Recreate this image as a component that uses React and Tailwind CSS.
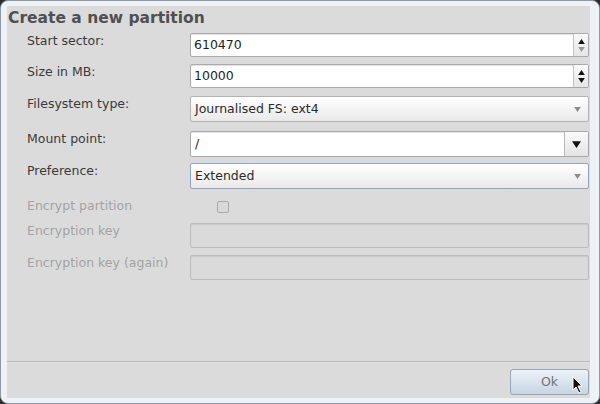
import React from "react";

// Small triangle used by the spin boxes and drop-downs
function Tri({ up = false, className = "", w = 7, h = 5 }) {
  return (
    <svg width={w} height={h} viewBox="0 0 8 6" className={className}>
      {up ? <polygon points="4,0 8,6 0,6" fill="currentColor" /> : <polygon points="0,0 8,0 4,6" fill="currentColor" />}
    </svg>
  );
}

function SpinField({ value, downDisabled }) {
  return (
    <div className="flex h-[24px] w-[399px] rounded-[2px] border border-[#a9a9a9] bg-white shadow-[inset_0_1px_1px_rgba(0,0,0,0.12)]">
      <div className="flex flex-1 items-center pl-[3px] text-[12.5px] text-[#1e1e1e]">{value}</div>
      <div className="flex w-[15px] flex-col items-center justify-center gap-[3px] border-l border-[#c4c4c4] bg-gradient-to-b from-[#fafafa] to-[#e6e6e6]">
        <Tri up className="text-[#111]" />
        <Tri className={downDisabled ? "text-[#9a9a9a]" : "text-[#111]"} />
      </div>
    </div>
  );
}

function SelectField({ value, focused }) {
  return (
    <div
      className={
        focused
          ? "flex h-[26px] w-[399px] items-center rounded-[2px] border border-[#8ea6c0] bg-gradient-to-b from-white to-[#e9e9e9] pl-[4px] pr-[7px]"
          : "flex h-[26px] w-[399px] items-center rounded-[2px] border border-[#b3b3b3] bg-gradient-to-b from-white to-[#e9e9e9] pl-[4px] pr-[7px]"
      }
    >
      <span className="flex-1 text-[12.5px] text-[#2a2a2a]">{value}</span>
      <Tri className="text-[#8a8a8a]" />
    </div>
  );
}

function ComboField({ value }) {
  return (
    <div className="flex h-[26px] w-[399px] rounded-[2px] border border-[#a9a9a9] bg-white shadow-[inset_0_1px_1px_rgba(0,0,0,0.12)]">
      <div className="flex flex-1 items-center pl-[4px] text-[12.5px] text-[#1e1e1e]">{value}</div>
      <div className="flex w-[24px] items-center justify-center border-l border-[#b8b8b8] bg-gradient-to-b from-[#fbfbfb] to-[#e4e4e4]">
        <Tri className="text-[#111]" w={9} h={7} />
      </div>
    </div>
  );
}

function DisabledField() {
  return (
    <div className="h-[25px] w-[399px] rounded-[2px] border border-[#bdbdbd] bg-[#dadada] shadow-[inset_0_1px_1px_rgba(0,0,0,0.08)]" />
  );
}

function Row({ label, disabled, className = "", children }) {
  return (
    <div className={"flex items-start " + className}>
      <div
        className={
          disabled
            ? "w-[163px] text-[12.5px] leading-[16px] text-[#a3a3a3]"
            : "w-[163px] text-[12.5px] leading-[16px] text-[#3a3a3a]"
        }
      >
        {label}
      </div>
      {children}
    </div>
  );
}

export default function App() {
  return (
    <div className="h-[404px] w-[600px] bg-[#2c2c2c] font-['DejaVu_Sans',sans-serif]">
      <div className="h-full rounded-[8px] border border-[#8f99a3] bg-[#eef2f6] pb-[5px] pl-[6px] pr-[9px] pt-[5px]">
        <div className="flex h-full flex-col bg-[#dbdbdb]">
          {/* Dialog title */}
          <h1 className="pl-[1px] pt-[3px] text-[15.5px] font-bold leading-[18px] text-[#505050]">
            Create a new partition
          </h1>

          {/* Form rows */}
          <div className="mt-[6px] flex flex-col pl-[20px] pr-[1px]">
            <Row label="Start sector:">
              <SpinField value="610470" downDisabled />
            </Row>
            <Row label="Size in MB:" className="mt-[7px]">
              <SpinField value="10000" />
            </Row>
            <Row label="Filesystem type:" className="mt-[8px]">
              <SelectField value="Journalised FS: ext4" />
            </Row>
            <Row label="Mount point:" className="mt-[9px]">
              <ComboField value="/" />
            </Row>
            <Row label="Preference:" className="mt-[6px]">
              <SelectField value="Extended" focused />
            </Row>
            <Row label="Encrypt partition" disabled className="mt-[9px]">
              <div className="ml-[27px] mt-[3px] h-[12px] w-[12px] rounded-[2px] border border-[#a9a9a9] bg-[#d9d9d9]" />
            </Row>
            <Row label="Encryption key" disabled className="mt-[9px]">
              <DisabledField />
            </Row>
            <Row label="Encryption key (again)" disabled className="mt-[7px]">
              <DisabledField />
            </Row>
          </div>

          <div className="flex-1" />

          {/* Separator and buttons */}
          <div className="h-[2px] border-t border-[#b9b9b9] bg-[#e2e2e2]" />
          <div className="mb-[3px] mt-[6px] flex justify-end pr-[1px]">
            <button className="relative h-[26px] w-[79px] rounded-[3px] border border-[#97a5b4] bg-gradient-to-b from-[#edf2f7] to-[#c7d5e2] text-[12.5px] text-[#737373]">
              Ok
              <svg
                width="12"
                height="18"
                viewBox="0 0 12 18"
                className="absolute left-[61px] top-[6px]"
              >
                <polygon
                  points="1,1 1,14 4,11 7,17 9,16 6,10 10,10"
                  fill="#111"
                  stroke="#fff"
                  strokeWidth="1"
                  strokeLinejoin="round"
                />
              </svg>
            </button>
          </div>
        </div>
      </div>
    </div>
  );
}
